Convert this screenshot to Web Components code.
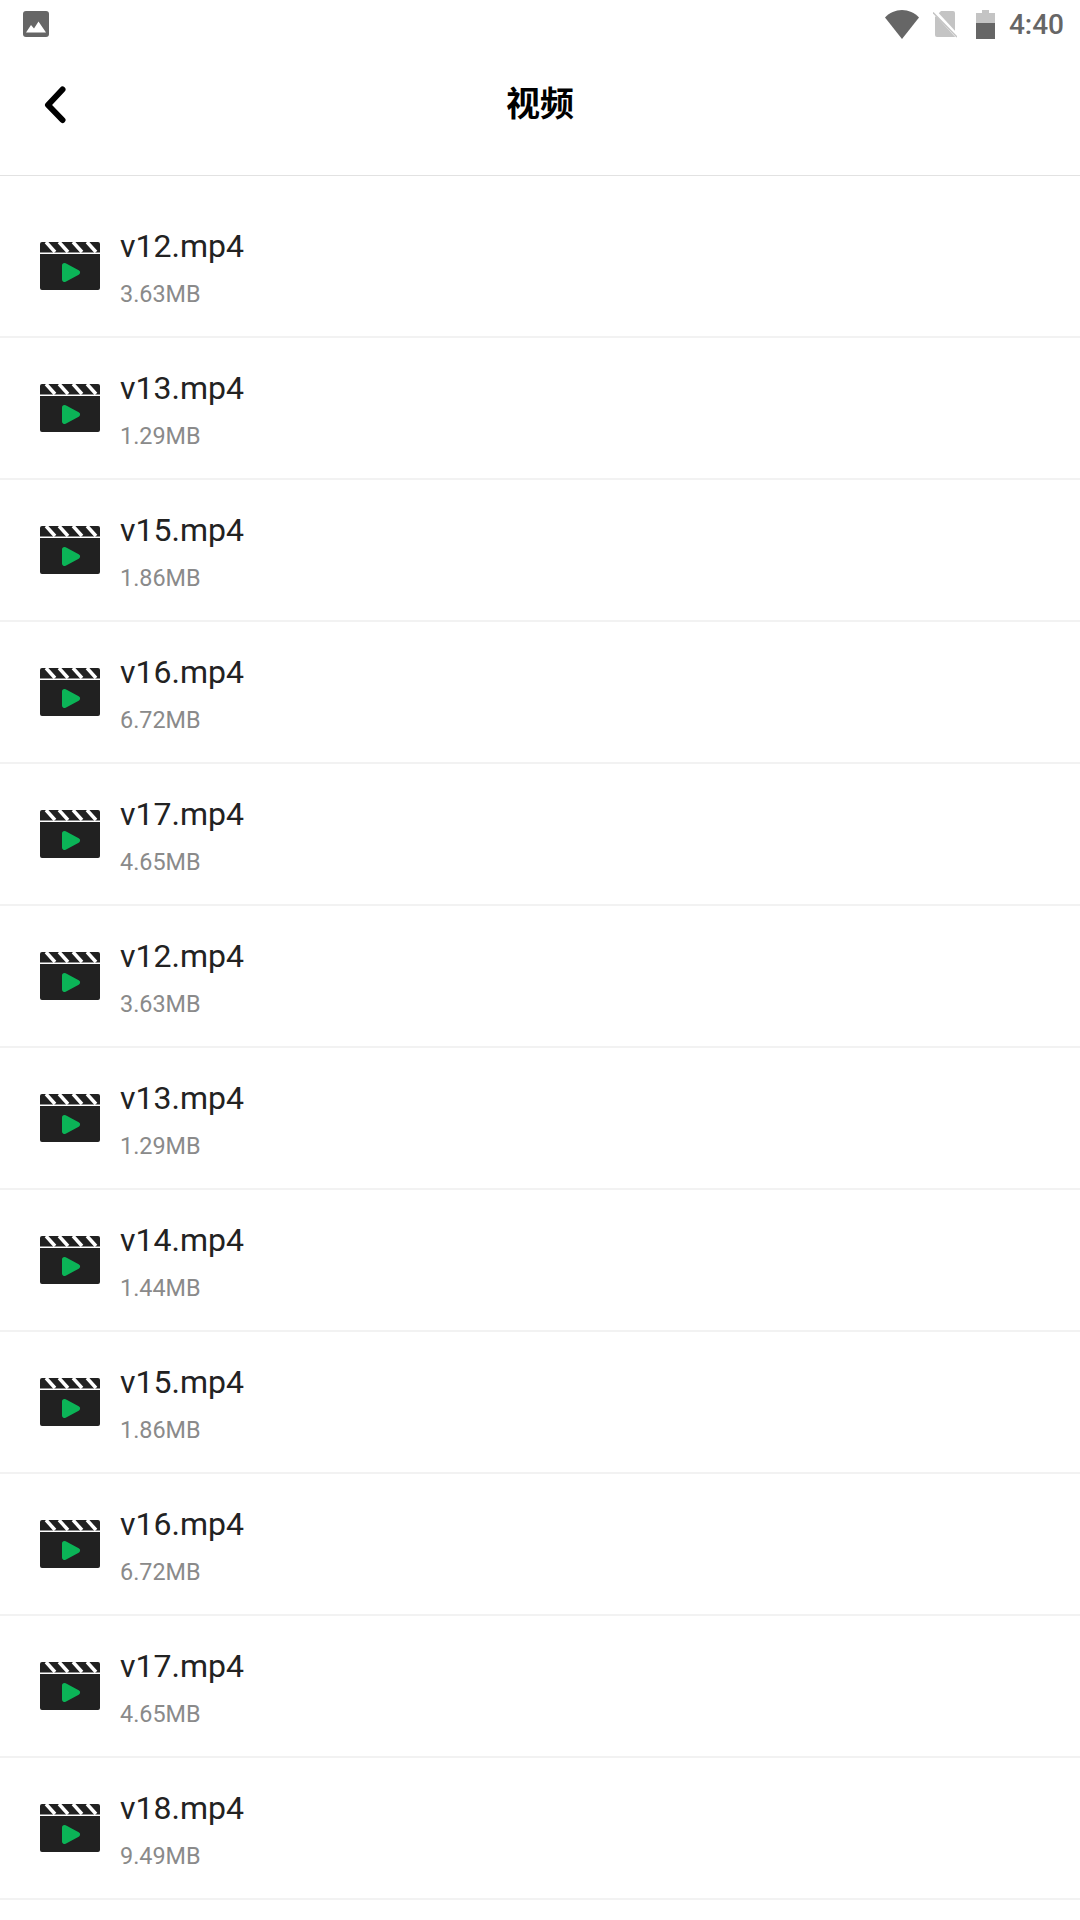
<!DOCTYPE html>
<html><head><meta charset="utf-8"><style>
html,body{margin:0;padding:0;background:#fff;}
body{width:1080px;height:1920px;overflow:hidden;font-family:Roboto,"Noto Sans CJK SC",sans-serif;}
</style></head><body>
<app-screen></app-screen>
<script>
class StatusBar extends HTMLElement{constructor(){super();this.attachShadow({mode:'open'}).innerHTML=`<style>
:host{display:flex;align-items:center;height:50px;padding:0 16px 2px 23px;box-sizing:border-box;color:#666}
svg{display:block}.sp{flex:1}.t{font:500 28px Roboto,sans-serif;margin-left:14px;color:#666}
</style>
<svg width="26" height="26" viewBox="0 0 26 26"><rect width="26" height="26" rx="3" fill="#666"/><path d="M3 21.500 8 14l3 3.500 4.500-7 7.500 11z" fill="#fff"/></svg>
<span class="sp"></span>
<svg width="34" height="29" viewBox="0 0 34 29" style="margin-right:14px"><path d="M0 7.500C4.500 2.800 10.500 0 17 0s12.500 2.800 17 7.500L17 29z" fill="#666"/></svg>
<svg width="24" height="27" viewBox="0 0 24 27" style="margin-right:19px"><path d="M8 0h12a2 2 0 0 1 2 2v24H4a2 2 0 0 1-2-2V6z" fill="#c4c4c4"/><path d="M1 0 24 25" stroke="#fff" stroke-width="4"/><path d="M0 1.500 24 26" stroke="#c4c4c4" stroke-width="1.500"/></svg>
<svg width="19" height="29" viewBox="0 0 19 29"><path d="M6 0h7v3h6v10H0V3h6z" fill="#c4c4c4"/><rect y="13" width="19" height="16" fill="#666"/></svg>
<span class="t">4:40</span>`}}
customElements.define('status-bar',StatusBar);

class NavBar extends HTMLElement{constructor(){super();this.attachShadow({mode:'open'}).innerHTML=`<style>
:host{display:flex;align-items:center;justify-content:center;position:relative;height:126px;padding-bottom:22px;border-bottom:1px solid #e2e2e2;box-sizing:border-box}
.b{position:absolute;left:43px;top:36px;display:block}
.h{font:700 34px "Noto Sans CJK SC",sans-serif;color:#000}
</style>
<svg class="b" width="24" height="38" viewBox="0 0 24 38"><path d="M19.500 3.500 5 19l14.500 15" fill="none" stroke="#000" stroke-width="6" stroke-linecap="round" stroke-linejoin="round"/></svg>
<span class="h"><slot></slot></span>`}}
customElements.define('nav-bar',NavBar);

class VideoRow extends HTMLElement{constructor(){super();this.attachShadow({mode:'open'}).innerHTML=`<style>
:host{display:flex;align-items:center;height:142px;box-sizing:border-box;border-bottom:2px solid #f2f2f2;padding-left:40px}
svg{display:block;margin-right:20px;flex:none}
.c{display:flex;flex-direction:column;padding-top:4px}
.n{font:400 32px/38px Roboto,sans-serif;color:#222;margin-top:-2px}
.s{font:400 23.400px/28px Roboto,sans-serif;color:#8a8a8a;margin-top:15px}
</style>
<svg width="60" height="48" viewBox="0 0 60 48"><path d="M2 0h56a2 2 0 0 1 2 2v8.500H0V2a2 2 0 0 1 2-2zM0 12h60v34a2 2 0 0 1-2 2H2a2 2 0 0 1-2-2z" fill="#212121"/><path d="M6 0l9 10M19 0l9 10M33 0l9 10M47 0l9 10" stroke="#fff" stroke-width="3.500" fill="none"/><path d="M24.500 23.500 37.500 30.500 24.500 37.500z" fill="#0bb457" stroke="#0bb457" stroke-width="5" stroke-linejoin="round"/></svg>
<div class="c"><span class="n"><slot></slot></span><span class="s"><slot name="size"></slot></span></div>`}}
customElements.define('video-row',VideoRow);

class AppScreen extends HTMLElement{constructor(){super();
const items=[['v12','3.63'],['v13','1.29'],['v15','1.86'],['v16','6.72'],['v17','4.65'],['v12','3.63'],['v13','1.29'],['v14','1.44'],['v15','1.86'],['v16','6.72'],['v17','4.65'],['v18','9.49']];
this.attachShadow({mode:'open'}).innerHTML=`<style>:host{display:block;width:1080px;height:1920px;overflow:hidden;background:#fff}.l{padding-top:20px}</style>
<status-bar></status-bar><nav-bar>视频</nav-bar><div class="l">${items.map(i=>`<video-row>${i[0]}.mp4<span slot="size">${i[1]}MB</span></video-row>`).join('')}</div>`}}
customElements.define('app-screen',AppScreen);
</script></body></html>
